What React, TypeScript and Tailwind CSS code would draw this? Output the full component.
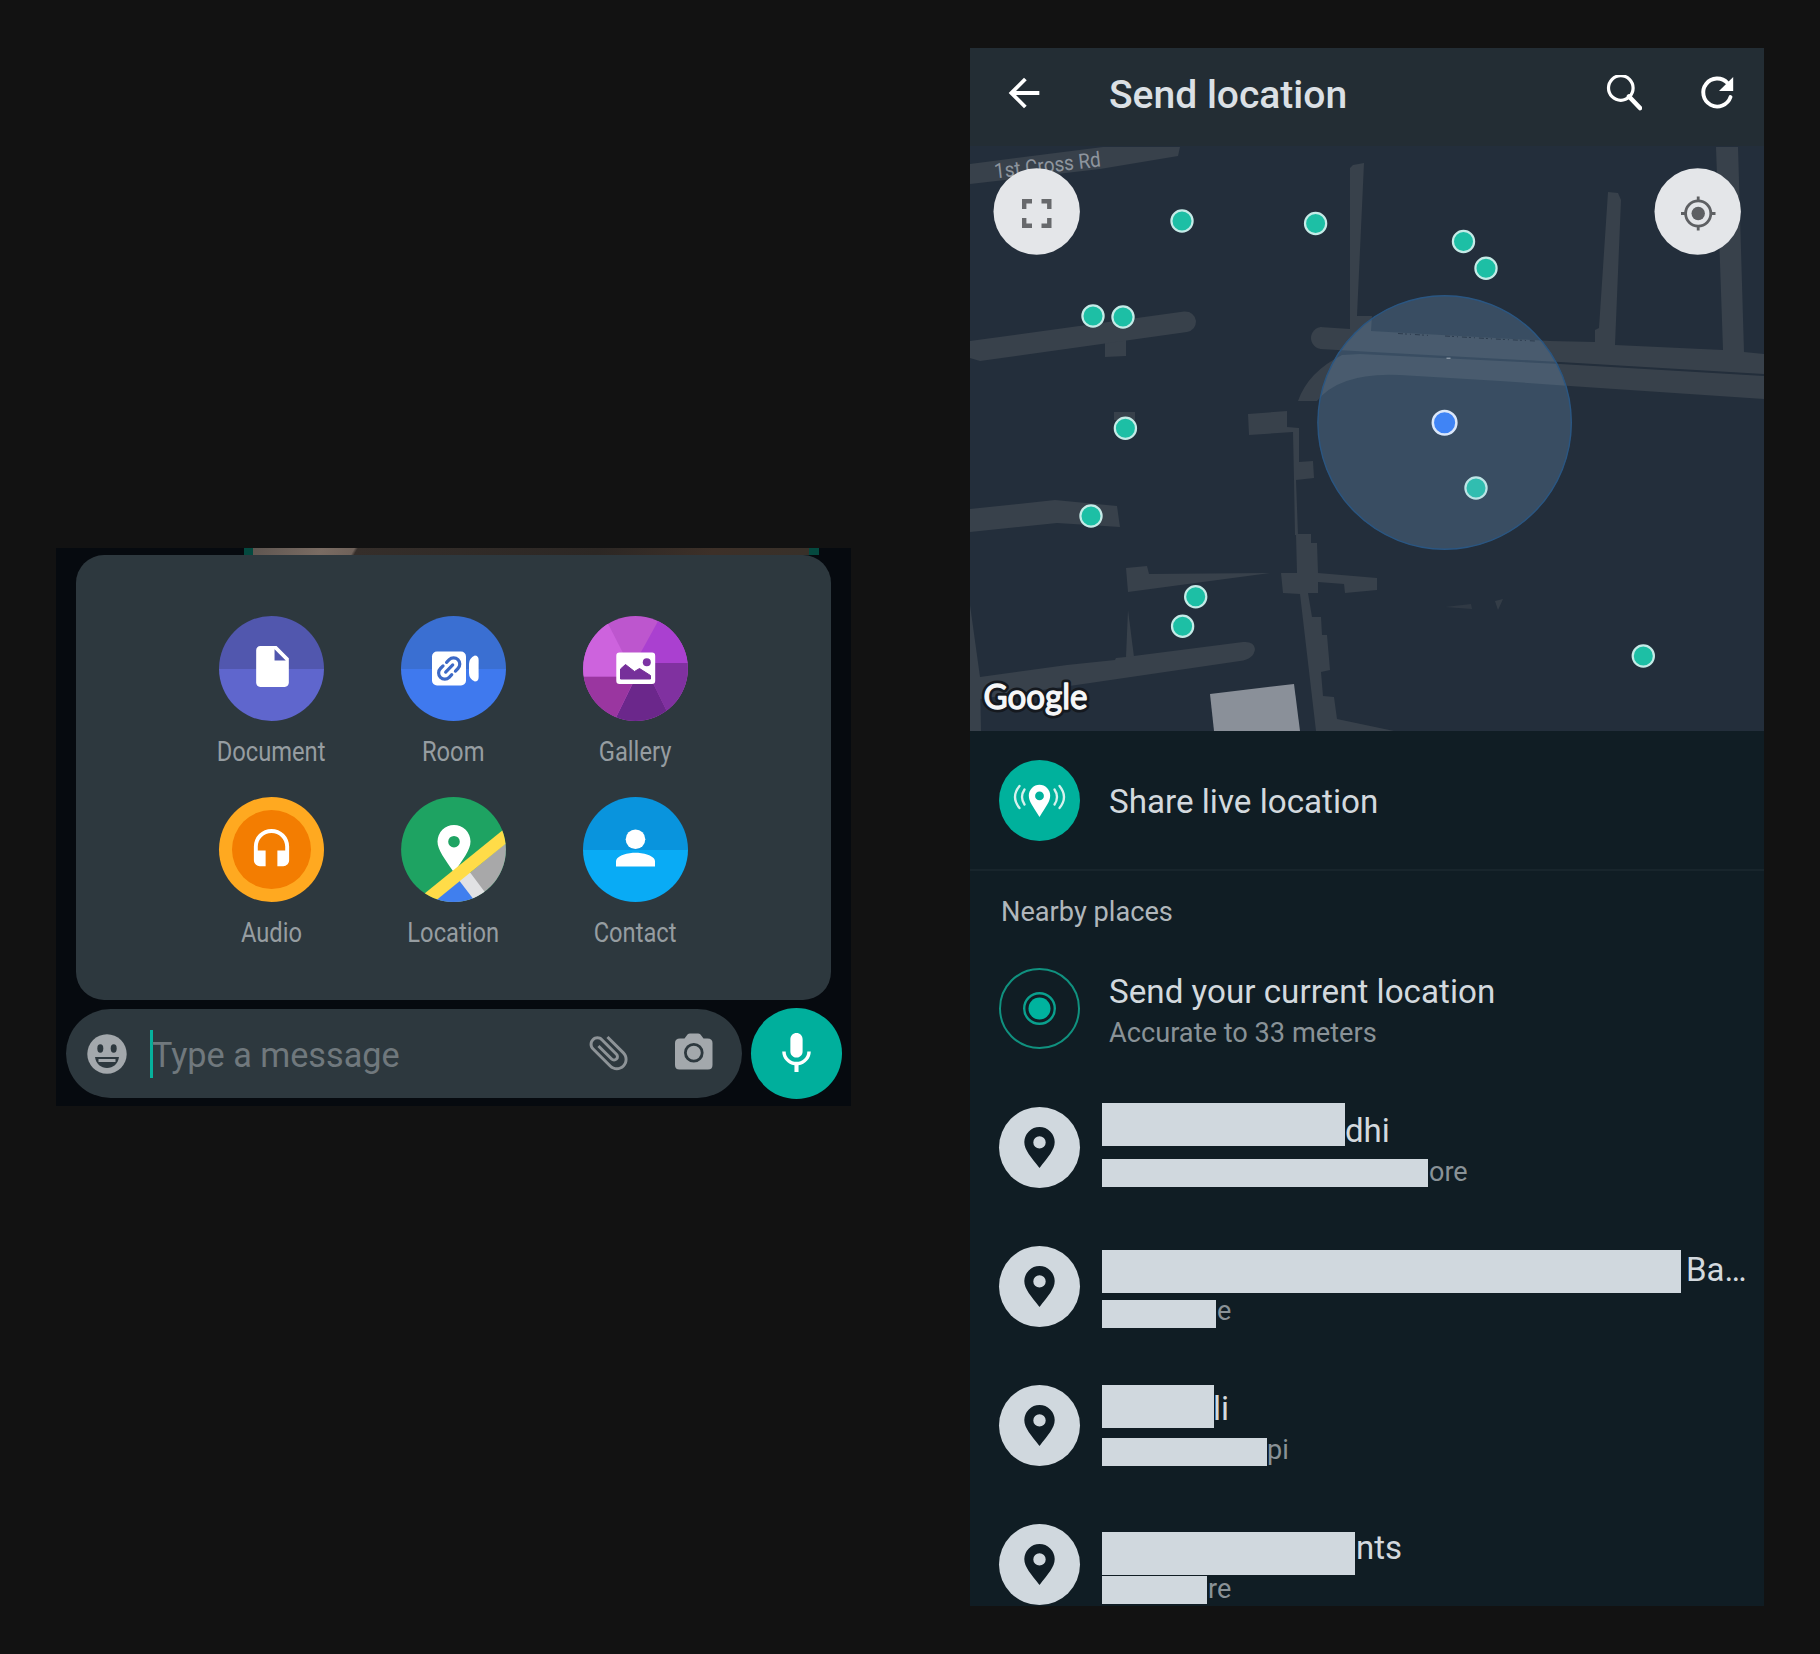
import React from "react";
import { MdArrowBack, MdAttachFile, MdHeadset, MdInsertDriveFile, MdMic } from "react-icons/md";

const FONT = "font-[Roboto,sans-serif]";

function SplitDisc({ top, bottom, children }: { top: string; bottom: string; children: React.ReactNode }) {
  return (
    <div className="relative size-[105px] overflow-hidden rounded-full">
      <div className={`h-[53px] ${top}`} />
      <div className={`h-[52px] ${bottom}`} />
      <div className="absolute inset-0 flex items-center justify-center text-white">{children}</div>
    </div>
  );
}

function RoomGlyph() {
  return (
    <svg className="size-[105px]" viewBox="0 0 105 105">
      <rect x="31" y="35.5" width="34" height="34" rx="5" fill="#fff" />
      <g fill="none" stroke="#3d69c6" strokeWidth="3.2" strokeLinecap="round" transform="translate(48.2 52.5) rotate(-45)">
        <path d="M-2.5 -6.2H-6.2A6.2 6.2 0 0 0 -6.2 6.2H-2.6" />
        <path d="M2.5 -6.2H6.2A6.2 6.2 0 0 1 6.2 6.2H2.6" />
        <path d="M-5 0H5" />
      </g>
      <path d="M77.6 44V61Q77.6 65.5 73.8 65.5Q68 63 68 57V48Q68 42 73.8 39.5Q77.6 39.5 77.6 44Z" fill="#fff" />
    </svg>
  );
}

function GalleryDisc() {
  return (
    <svg className="size-[105px]" viewBox="0 0 105 105">
      <defs>
        <clipPath id="gallery-disc">
          <circle cx="52.5" cy="52.5" r="52.4" />
        </clipPath>
      </defs>
      <g clipPath="url(#gallery-disc)">
        <rect width="105" height="105" fill="#bd56ce" />
        <path d="M74 7 82 -10H120V47H52Z" fill="#aa40d0" />
        <path d="M52 47H120V120H96L70 67Z" fill="#8031a0" />
        <path d="M50 67H70L96 120H24Z" fill="#6b278b" />
        <path d="M-10 60.5H53L24 120H-10Z" fill="#9a36a0" />
        <path d="M-10 60.5H52L16 -10H-10Z" fill="#cd63dd" />
      </g>
      <path
        d="M36.5 36.5h32.5a3.2 3.2 0 0 1 3.2 3.2v25a3.2 3.2 0 0 1-3.2 3.2H36.5a3.2 3.2 0 0 1-3.2-3.2v-25a3.2 3.2 0 0 1 3.2-3.2Z"
        fill="#fff"
      />
      <path d="M37.5 63V53L42.5 48.5 51.5 55.5 56.5 52.5 67.5 59.5V63Z" fill="#76309a" stroke="#76309a" strokeWidth="1" strokeLinejoin="round" />
      <circle cx="63.8" cy="46.2" r="4" fill="#7d33a4" />
    </svg>
  );
}

function LocationDisc() {
  return (
    <svg className="size-[105px]" viewBox="0 0 105 105">
      <defs>
        <clipPath id="location-disc">
          <circle cx="52.5" cy="52.5" r="52.4" />
        </clipPath>
      </defs>
      <g clipPath="url(#location-disc)">
        <rect width="105" height="105" fill="#1ea362" />
        <path d="M110 42V110H36V103Z" fill="#a8a8a9" />
        <path d="M60 82 78 110H26Z" fill="#407fee" />
        <path d="M57 82 68 74 92 106 80 112Z" fill="#e1e2e4" />
        <path
          fillRule="evenodd"
          d="M53 28A16.5 16.5 0 0 1 69.5 44.5C69.5 53 62 62 53 75.5C44 62 36.5 53 36.5 44.5A16.5 16.5 0 0 1 53 28ZM53 38.9A5.8 5.8 0 1 0 53 50.5A5.8 5.8 0 1 0 53 38.9Z"
          fill="#fff"
        />
        <path d="M110 26.5V42.5L30 107.5 18 101Z" fill="#ffdc48" />
      </g>
    </svg>
  );
}

function PersonGlyph() {
  return (
    <svg className="size-[105px]" viewBox="0 0 105 105">
      <circle cx="52.5" cy="42.2" r="9.8" fill="#fff" />
      <path d="M33 69.5V64.5C33 58 46 55.7 52.5 55.7S72 58 72 64.5V69.5Z" fill="#fff" />
    </svg>
  );
}

function AttachItem({ label, children }: { label: string; children: React.ReactNode }) {
  return (
    <div className="flex h-[181px] flex-col items-center">
      {children}
      <span className="mt-[15px] scale-x-[.862] text-[27.5px] leading-8 text-[#969da1]">{label}</span>
    </div>
  );
}

function AttachSheet() {
  return (
    <section className="mt-[548px] ml-14 h-[558px] w-[795px] shrink-0 overflow-hidden bg-[#060a0f]">
      <div className="ml-[188px] flex h-[7px] w-[575px] bg-[#04493f]">
        <div className="ml-[9px] h-[7px] w-[556px] bg-[linear-gradient(120deg,#5e5550_0,#7a6c63_60px,#6f625a_88px,#352e2a_91px,#2c2724_300px,#3d3028_400px,#33302a_556px)]" />
      </div>
      <div className="ml-5 h-[445px] w-[755px] rounded-[28px] bg-[#2d383e] pt-[60.5px]">
        <div className="grid grid-cols-[182px_182px_182px] justify-center">
          <AttachItem label="Document">
            <SplitDisc top="bg-[#5157ae]" bottom="bg-[#5f66cd]">
              <MdInsertDriveFile className="mb-[3px] ml-[2px] size-[49px]" />
            </SplitDisc>
          </AttachItem>
          <AttachItem label="Room">
            <SplitDisc top="bg-[#3a6fd2]" bottom="bg-[#3f79ee]">
              <RoomGlyph />
            </SplitDisc>
          </AttachItem>
          <AttachItem label="Gallery">
            <GalleryDisc />
          </AttachItem>
          <AttachItem label="Audio">
            <div className="flex size-[105px] items-center justify-center rounded-full bg-[#ffa920]">
              <div className="flex size-[79px] items-center justify-center rounded-full bg-[#f37d01] text-white">
                <MdHeadset className="mt-[2px] size-[47px]" />
              </div>
            </div>
          </AttachItem>
          <AttachItem label="Location">
            <LocationDisc />
          </AttachItem>
          <AttachItem label="Contact">
            <SplitDisc top="bg-[#0994dd]" bottom="bg-[#09abf5]">
              <PersonGlyph />
            </SplitDisc>
          </AttachItem>
        </div>
      </div>
      <div className="mt-2 ml-[10px] flex items-center">
        <div className="flex h-[89px] w-[676px] items-center rounded-full bg-[#2d383e]">
          <svg className="ml-[21px] size-10" viewBox="0 0 40 40">
            <circle cx="20" cy="20" r="19.7" fill="#a3a8ac" />
            <ellipse cx="13.3" cy="14.5" rx="3" ry="4.2" fill="#2d383e" />
            <ellipse cx="26.7" cy="14.5" rx="3" ry="4.2" fill="#2d383e" />
            <path d="M8 23H32C31 30 26 34 20 34S9 30 8 23Z" fill="#2d383e" />
            <path d="M11.5 25H28.5V28H11.5Z" fill="#a3a8ac" />
          </svg>
          <div className="ml-[23px] h-[48px] w-[3px] bg-[#06b19c]" />
          <span className="mt-[2px] -ml-[1px] w-[433px] text-[34.2px] leading-10 text-[#70787d]">Type a message</span>
          <MdAttachFile className="mb-[2px] size-[47px] -rotate-45 text-[#8d9397]" />
          <svg className="mb-1 ml-[42px] size-[40px]" viewBox="0 0 40 40">
            <path
              d="M10.5 6.5 13.5 2.5Q14.5 1.5 16 1.5H24Q25.5 1.5 26.5 2.5L29.5 6.5H33.5Q38.5 6.5 38.5 11V33Q38.5 37.5 34 37.5H5.5Q1 37.5 1 33V11Q1 6.5 6 6.5Z"
              fill="#a3a8ac"
            />
            <circle cx="19.8" cy="20.8" r="8.4" fill="none" stroke="#2d383e" strokeWidth="2.8" />
          </svg>
        </div>
        <div className="ml-[9px] flex size-[91px] items-center justify-center rounded-full bg-[#00af9c] text-white">
          <MdMic className="size-[49px]" />
        </div>
      </div>
    </section>
  );
}

const ROADS = [
  "970,164 1103,147 1180,147 1178,156 1100,169 970,184",
  "1105,340 1126,338 1126,356 1105,357",
  "1350,168 1353,165 1364,163 1357,316 1372,316 1371,331 1550,341 1595,342 1595,330 1599,328 1608,192 1618,193 1621,200 1615,345 1723,350 1716,147 1738,147 1744,352 1764,354 1764,374 1560,362 1372,352 1320,349 1320,327 1350,329",
  "1114,412 1135,412 1135,420 1114,420",
  "970,509 1055,500 1117,506 1120,527 1057,523 970,532",
  "1248,414 1287,411 1287,427 1299,428 1299,462 1313,461 1314,478 1296,480 1298,535 1295,535 1294,480 1293,432 1249,435",
  "1296,534 1311,534 1311,543 1317,543 1318,573 1377,578 1377,590 1345,593 1344,584 1318,582 1318,593 1308,593 1312,617 1321,617 1322,635 1327,635 1330,670 1321,672 1323,696 1334,697 1337,719 1394,731 1316,731 1300,594 1283,593 1281,573 1297,573",
  "1126,568 1147,566 1149,574 1270,573 1128,592",
  "1126,657 1128,610 1134,657",
  "970,605 980,677 981,731 970,731",
];

const PLACES = [
  [1182, 221],
  [1315.6, 223.5],
  [1463.5, 241.5],
  [1486, 268.3],
  [1093, 316],
  [1123, 317],
  [1125.4, 428.3],
  [1091, 516],
  [1195.7, 596.7],
  [1182.6, 626.3],
  [1643.3, 656],
];

function MapView() {
  return (
    <svg className="block h-[585px] w-[794px] shrink-0 bg-[#232e3b]" viewBox="970 146 794 585">
      <g fill="#38414b">
        {ROADS.map((points) => (
          <polygon key={points} points={points} />
        ))}
        <path d="M970 341 1184 311.5Q1194 311 1196 321Q1196 330 1187 332L980 361 970 358Z" />
        <path d="M980 677 1067 665 1115 660 1116 658 1126 657 1243 642Q1254 641 1255 649Q1254 659 1240 661L1090 683 980 699Z" />
        <path d="M1322 327A11 11 0 0 0 1322 349Z" />
        <path d="M1298 401Q1308 372 1342 355L1360 354 1560 364 1764 376V399L1570 386 1500 381 1400 375Q1340 372 1317 401Z" />
        <path d="M1445 607 1471 604 1472 609Z" opacity=".6" />
        <path d="M1495 601 1503 599 1498 610Z" opacity=".8" />
      </g>
      <polygon points="1210,694 1294,684 1300,731 1214,731" fill="#8a9099" />
      <text x="995" y="178.5" transform="rotate(-6.5 995 178.5)" textLength="107" lengthAdjust="spacingAndGlyphs" className={FONT} fontSize="21" fill="#8e959e">
        1st Cross Rd
      </text>
      <circle cx="1444.6" cy="422.5" r="127" fill="#7badd7" fillOpacity=".25" />
      <circle cx="1444.6" cy="422.5" r="126.7" fill="none" stroke="#2a5682" strokeWidth="1.4" />
      <path d="M1398 333.5 1430 335.5M1445 336 1495 339 1535 341" fill="none" stroke="#2c3c4e" strokeWidth="1" strokeDasharray="5 2 2 3 1 4" />
      <path d="M1446.5 358.2H1450.5" stroke="#a9b3bd" strokeWidth="1" />
      {PLACES.map(([x, y]) => (
        <circle key={`${x}-${y}`} cx={x} cy={y} r="10.6" fill="#1dbfa5" stroke="#c5ebe7" strokeWidth="2.2" />
      ))}
      <circle cx="1476" cy="488" r="10.6" fill="#31bdb0" stroke="#bde4e6" strokeWidth="2.2" />
      <circle cx="1444.6" cy="422.7" r="11.8" fill="#4084f5" stroke="#dbe7f9" strokeWidth="2.5" />
      {/* Dark halo under a lightly thickened regular weight keeps the wordmark's round bowls. */}
      <g className="font-[Lato,sans-serif]" fontSize="35" strokeLinejoin="round">
        <text x="983.5" y="709.3" textLength="104" lengthAdjust="spacingAndGlyphs" fill="#15191f" stroke="#15191f" strokeWidth="7" aria-hidden="true">
          Google
        </text>
        <text x="983.5" y="709.3" textLength="104" lengthAdjust="spacingAndGlyphs" fill="#f6f7f8" stroke="#f6f7f8" strokeWidth="1.3">
          Google
        </text>
      </g>
      <circle cx="1036.7" cy="211.5" r="43.2" fill="#e4e6e9" />
      <path d="M1024.2 209V201.2H1032M1041.5 201.2H1049.3V209M1049.3 218V225.8H1041.5M1032 225.8H1024.2V218" fill="none" stroke="#67696c" strokeWidth="4.4" />
      <circle cx="1697.7" cy="211.5" r="43.2" fill="#e4e6e9" />
      <g fill="none" stroke="#5e6063" strokeWidth="2.8">
        <circle cx="1698.2" cy="213.5" r="12.6" />
        <path d="M1698.2 196.5V202M1698.2 225V230.5M1681 213.5H1686.5M1710 213.5H1715.5" />
      </g>
      <circle cx="1698.2" cy="213.5" r="6.7" fill="#5e6063" />
    </svg>
  );
}

function PlacePin() {
  return (
    <div className="ml-[29px] flex size-[81px] shrink-0 items-center justify-center rounded-full bg-[#d0d8de]">
      <svg className="h-[41px] w-[31px]" viewBox="0 0 31 41">
        <path
          fillRule="evenodd"
          d="M15.5 0A15.2 15.2 0 0 1 30.7 15C30.7 23 24 30 15.5 41C7 30 .3 23 .3 15A15.2 15.2 0 0 1 15.5 0ZM15.5 9.2A6.2 6.2 0 1 0 15.5 21.6A6.2 6.2 0 1 0 15.5 9.2Z"
          fill="#101d25"
        />
      </svg>
    </div>
  );
}

const NEARBY = [
  { title: "dhi", sub: "ore", bar: "w-[243px]", subBar: "w-[326px]", gap: "", subGap: "ml-[1px]" },
  { title: "Ba…", sub: "e", bar: "mt-2 w-[579px]", subBar: "mt-[2px] w-[114px]", gap: "ml-[5px]", subGap: "ml-[1px]" },
  { title: "li", sub: "pi", bar: "mt-1 w-[112px]", subBar: "mt-[1px] w-[165px]", gap: "-ml-[1px]", subGap: "" },
  { title: "nts", sub: "re", bar: "mt-3 w-[253px]", subBar: "w-[105px]", gap: "ml-[1px]", subGap: "ml-[1px]" },
];

function SendLocation() {
  return (
    <section className="mt-12 ml-[119px] flex h-[1558px] w-[794px] shrink-0 flex-col overflow-hidden bg-[#101d24]">
      <header className="flex h-[98px] shrink-0 items-center bg-[#232d34] pb-[9px] text-white">
        <MdArrowBack className="ml-[31px] size-[46px]" />
        <h1 className="ml-[62px] w-[497px] pt-1 text-[39px] leading-[46px] font-medium text-[#dbe0e5]">Send location</h1>
        <svg className="size-9 shrink-0" viewBox="0 0 36 36" fill="none" stroke="#fff">
          <circle cx="14.8" cy="13" r="12.3" strokeWidth="3.2" />
          <path d="M23 21.5 34 33" strokeWidth="4.6" strokeLinecap="round" />
        </svg>
        <svg className="ml-[57px] size-9 shrink-0" viewBox="0 0 36 36">
          <path d="M31.5 22A14 14 0 1 1 28.5 8" fill="none" stroke="#fff" strokeWidth="3.9" strokeLinecap="round" />
          <path d="M34.2 2V16H20Z" fill="#fff" />
        </svg>
      </header>
      <MapView />
      <div className="flex h-[140px] shrink-0 items-center border-b-2 border-[#18252c]">
        <svg className="ml-[29px] size-[81px]" viewBox="0 0 81 81">
          <circle cx="40.5" cy="40.5" r="40.5" fill="#00b19c" />
          <path
            fillRule="evenodd"
            d="M40.5 24.8A10.7 10.7 0 0 1 51.2 35.5C51.2 42 47 46 40.5 57C34 46 29.8 42 29.8 35.5A10.7 10.7 0 0 1 40.5 24.8ZM40.5 31.5A4.4 4.4 0 1 0 40.5 40.3A4.4 4.4 0 1 0 40.5 31.5Z"
            fill="#fff"
          />
          <g fill="none" stroke="#d6f1ed" strokeWidth="2.3" strokeLinecap="round">
            <path d="M25.5 29.5Q20.5 37 25.500 44.5M20.5 26Q11.5 37 20.5 48" />
            <path d="M55.5 29.5Q60.5 37 55.5 44.5M60.5 26Q69.5 37 60.5 48" />
          </g>
        </svg>
        <span className="ml-[29px] pt-1 text-[33.2px] leading-10 text-[#d3d9de]">Share live location</span>
      </div>
      <h2 className="h-[68px] shrink-0 pt-[23px] pl-[31px] text-[27.2px] leading-9 text-[#b0b7bc]">Nearby places</h2>
      <div className="flex h-[139px] shrink-0">
        <svg className="mt-[29px] ml-[29px] size-[81px]" viewBox="0 0 81 81">
          <circle cx="40.5" cy="40.5" r="39.5" fill="none" stroke="#10917f" strokeWidth="2" />
          <circle cx="40.5" cy="40.5" r="15.3" fill="none" stroke="#0aa08e" strokeWidth="2.4" />
          <circle cx="40.5" cy="40.5" r="11" fill="#00b39e" />
        </svg>
        <div className="ml-[29px] pt-[31px]">
          <div className="h-[49px] text-[33.2px] leading-[43px] text-[#d3d9de]">Send your current location</div>
          <div className="text-[27.2px] leading-7 text-[#899297]">Accurate to 33 meters</div>
        </div>
      </div>
      {NEARBY.map((place) => (
        <div key={place.title} className="flex h-[139px] shrink-0 items-center">
          <PlacePin />
          <div className="ml-[22px] h-[139px] pt-[25px]">
            <div className="flex h-[56px] items-start">
              <div className={`h-[43px] shrink-0 bg-[#d0d8de] ${place.bar}`} />
              <span className={`pt-[6px] text-[33px] leading-[43px] text-[#d3d9de] ${place.gap}`}>{place.title}</span>
            </div>
            <div className="flex items-start">
              <div className={`h-7 shrink-0 bg-[#d0d8de] ${place.subBar}`} />
              <span className={`-mt-[1px] text-[27px] leading-7 text-[#899297] ${place.subGap}`}>{place.sub}</span>
            </div>
          </div>
        </div>
      ))}
    </section>
  );
}

export default function App() {
  return (
    <main className={`flex h-[1654px] w-[1820px] items-start overflow-hidden bg-[#121212] ${FONT}`}>
      <AttachSheet />
      <SendLocation />
    </main>
  );
}
